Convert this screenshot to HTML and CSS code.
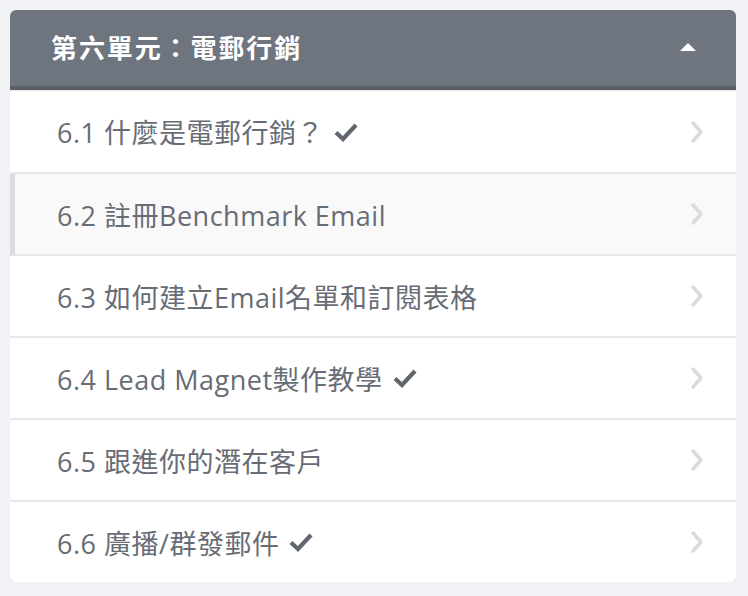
FILE: index.html
```html
<!DOCTYPE html>
<html lang="zh-Hant">
<head>
<meta charset="utf-8">
<link rel="stylesheet" href="styles.css">
</head>
<body>
<div class="card">
  <div class="head">
    <span class="head-title">第六單元：電郵行銷</span>
    <span class="caret"></span>
  </div>
  <ul class="list">
    <li class="item"><span class="label">6.1 什麼是電郵行銷？<svg class="check" viewBox="0 0 24 20" width="24" height="20"><path d="M2 10.5 L9 17 L22 3" fill="none" stroke="currentColor" stroke-width="4.2"/></svg></span><svg class="chev" viewBox="0 0 16 24" width="16" height="24"><path d="M4 3 L12 12 L4 21" fill="none" stroke="currentColor" stroke-width="3.5" stroke-linecap="round" stroke-linejoin="round"/></svg></li>
    <li class="item active"><span class="label">6.2 註冊Benchmark Email</span><svg class="chev" viewBox="0 0 16 24" width="16" height="24"><path d="M4 3 L12 12 L4 21" fill="none" stroke="currentColor" stroke-width="3.5" stroke-linecap="round" stroke-linejoin="round"/></svg></li>
    <li class="item"><span class="label">6.3 如何建立Email名單和訂閱表格</span><svg class="chev" viewBox="0 0 16 24" width="16" height="24"><path d="M4 3 L12 12 L4 21" fill="none" stroke="currentColor" stroke-width="3.5" stroke-linecap="round" stroke-linejoin="round"/></svg></li>
    <li class="item"><span class="label">6.4 Lead Magnet製作教學<svg class="check" viewBox="0 0 24 20" width="24" height="20"><path d="M2 10.5 L9 17 L22 3" fill="none" stroke="currentColor" stroke-width="4.2"/></svg></span><svg class="chev" viewBox="0 0 16 24" width="16" height="24"><path d="M4 3 L12 12 L4 21" fill="none" stroke="currentColor" stroke-width="3.5" stroke-linecap="round" stroke-linejoin="round"/></svg></li>
    <li class="item"><span class="label">6.5 跟進你的潛在客戶</span><svg class="chev" viewBox="0 0 16 24" width="16" height="24"><path d="M4 3 L12 12 L4 21" fill="none" stroke="currentColor" stroke-width="3.5" stroke-linecap="round" stroke-linejoin="round"/></svg></li>
    <li class="item"><span class="label">6.6 廣播/群發郵件<svg class="check" viewBox="0 0 24 20" width="24" height="20"><path d="M2 10.5 L9 17 L22 3" fill="none" stroke="currentColor" stroke-width="4.2"/></svg></span><svg class="chev" viewBox="0 0 16 24" width="16" height="24"><path d="M4 3 L12 12 L4 21" fill="none" stroke="currentColor" stroke-width="3.5" stroke-linecap="round" stroke-linejoin="round"/></svg></li>
  </ul>
</div>
</body>
</html>
```
FILE: styles.css
```css
html, body {
  margin: 0;
  padding: 0;
  background: #f1f2f6;
}
body {
  padding: 10px 12px 0 10px;
  font-family: "Open Sans", "Noto Sans CJK TC", sans-serif;
}
.card {
  width: 726px;
  background: #fff;
  border-radius: 6px;
  box-shadow: 0 2px 0 #e3e4e7;
  overflow: hidden;
}
.head {
  height: 76px;
  background: #6f757f;
  border-bottom: 4px solid #5b5f66;
  display: flex;
  align-items: center;
  justify-content: space-between;
  padding: 0 40px 0 41px;
  box-sizing: content-box;
}
.head-title {
  color: #fff;
  font-size: 26px;
  font-weight: 700;
  letter-spacing: 1.9px;
  margin-top: -2px;
}
.caret {
  width: 0;
  height: 0;
  border-left: 8px solid transparent;
  border-right: 8px solid transparent;
  border-bottom: 8px solid #fff;
  margin-top: -2px;
}
.list {
  list-style: none;
  margin: 0;
  padding: 0;
  border-top: 1px solid #e6e7e9;
}
.item {
  height: 80px;
  display: flex;
  align-items: center;
  justify-content: space-between;
  padding: 0 31px 0 47px;
  border-bottom: 2px solid #e6e7e9;
  color: #676c75;
  font-size: 27px;
}
.item:first-child {
  height: 81px;
}
.item:last-child {
  border-bottom: 0;
}
.item.active {
  background: #f9f9fa;
  border-left: 5px solid #dcdcdc;
  padding-left: 42px;
}
.label {
  display: flex;
  align-items: center;
  gap: 10px;
  letter-spacing: 0.5px;
}
.check {
  color: #61666e;
}
.chev {
  color: #dadbdd;
}
```
